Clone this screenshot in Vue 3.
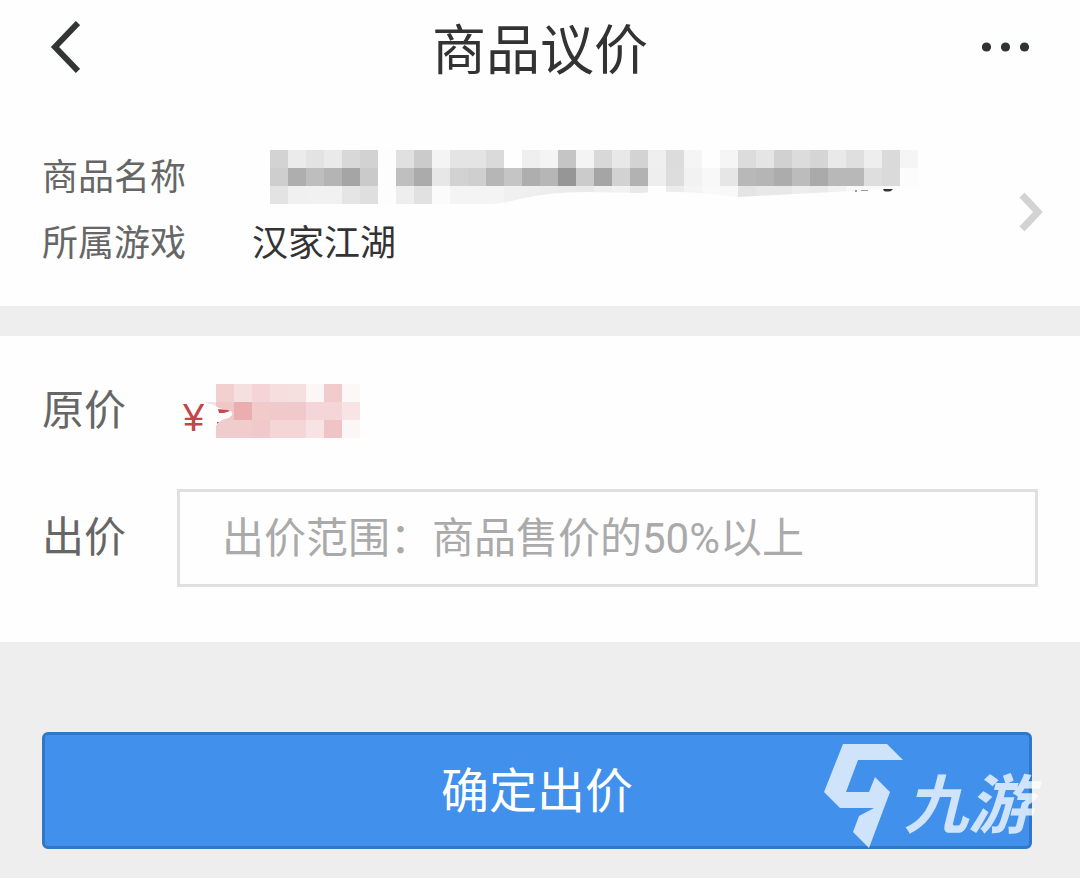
<script setup>
import { ref } from 'vue'

const offer = ref('')
const cell = 18

const nameRows = [
  'd3 eb e3 ea d8 d2 fd e0 cb f4 e4 e4 da fe ef f4 c5 f4 d8 e8 d3 ef dc f5 fe f5 dc e5 d1 dc d5 e9 df ee da f5',
  'ce ae be b4 a5 ca fd bf ab e7 d2 cf b6 c5 ae b6 96 cb a5 d2 b2 ee dd f2 f8 e6 b8 b5 ac bc aa b8 b8 de da fc',
  'e3 f0 f1 f1 e5 df fd ee e1 fb f4 f4 f4 f0 ef ed eb ea f0 f2 e8 fe ec f4 f9 f8 e4 e8 e8 ed eb f1 f8 f8 fa fd',
]
const priceRows = [
  'f3d0d0 f6dfdf f4d4d6 f6dede f5dfdf fdf6f6 f1cccc fdf8f8',
  'f0c6c6 eaaeb0 f1caca f0caca f0caca f5d6d8 f5d5d7 f8e4e5',
  'f1cccc f1cccc f1c9ca f5d6d7 f4d6d6 f7e3e3 f0c3c4 fcf6f6',
]

function toCells(rows) {
  return rows.flatMap((row, r) =>
    row.split(' ').map((c, i) => ({
      x: i * cell,
      y: r * cell,
      fill: '#' + (c.length === 2 ? c + c + c : c),
    })),
  )
}
const nameCells = toCells(nameRows)
const priceCells = toCells(priceRows)
</script>

<template>
  <div class="page">
    <header class="bar">
      <button class="icon-btn back" type="button" aria-label="返回">
        <svg width="32" height="54" viewBox="0 0 32 54">
          <path d="M30 2 L7 26 L30 50" />
        </svg>
      </button>
      <h1>商品议价</h1>
      <button class="icon-btn more" type="button" aria-label="更多">
        <svg width="50" height="14" viewBox="0 0 50 14">
          <circle cx="4.5" cy="6" r="4.6" />
          <circle cx="23.5" cy="6" r="4.6" />
          <circle cx="42.5" cy="6" r="4.6" />
        </svg>
      </button>
    </header>

    <a class="product" href="#">
      <dl>
        <dt>商品名称</dt>
        <dd class="hidden-name">
          <svg width="648" height="54" viewBox="0 0 648 54" aria-hidden="true">
            <clipPath id="nameClip">
              <path d="M0 0H648V37L615 39L600 40L468 47L440 44Q400 40 370 43L315 42Q280 42 250 49Q230 54 222 54H0Z" />
            </clipPath>
            <g clip-path="url(#nameClip)" shape-rendering="crispEdges">
              <rect v-for="(c, i) in nameCells" :key="i" :x="c.x" :y="c.y" :width="cell" :height="cell" :fill="c.fill" />
            </g>
            <path d="M585 40h2v2h-2zM591 40h7v1h-7z" fill="#999" />
            <path d="M613 39h10l-2 2q-4 1-7 0z" fill="#333" />
          </svg>
        </dd>
        <dt>所属游戏</dt>
        <dd>汉家江湖</dd>
      </dl>
      <svg class="chevron" width="26" height="42" viewBox="0 0 26 42" aria-hidden="true">
        <path d="M4 4 L20 21 L4 38" />
      </svg>
    </a>

    <form @submit.prevent>
      <section class="prices">
        <div class="row">
          <span class="label">原价</span>
          <span class="price">
            <span class="yen">¥</span>
            <svg width="156" height="54" viewBox="-12 0 156 54" aria-hidden="true">
              <path d="M-12 18H0V22Z" fill="#f8e3e3" />
              <g shape-rendering="crispEdges">
                <rect v-for="(c, i) in priceCells" :key="i" :x="c.x" :y="c.y" :width="cell" :height="cell" :fill="c.fill" />
              </g>
              <path d="M-1 22 L3 24 L11 26 Q18 27 16 31 Q14 34 9 35 Q2 37 -1 44Z" fill="#fefefe" />
              <path d="M2 25 L12 26 L14 27 L8 29 L3 29Z" fill="#c84a4c" />
              <path d="M1 38h2l-2 2z" fill="#c84a4c" />
            </svg>
          </span>
        </div>
        <div class="row">
          <label class="label" for="offer">出价</label>
          <input id="offer" v-model="offer" type="text" placeholder="出价范围：商品售价的50%以上" />
        </div>
      </section>

      <div class="actions">
        <button class="submit" type="submit">确定出价</button>
        <div class="mark">
          <svg width="80" height="104" viewBox="0 0 80 104" aria-hidden="true">
            <path d="M19 0H63L79 16H34L22 48H45L51 33L66 48L45 104L29 88L35 72L50 64H16L0 48Z" />
          </svg>
          <span>九游</span>
        </div>
      </div>
    </form>
  </div>
</template>

<style>
body {
  margin: 0;
  background: #eee;
}
</style>

<style scoped>
.page {
  font-family: Roboto, "Noto Sans CJK SC", sans-serif;
  font-weight: 400;
  color: #333;
}
.bar {
  display: grid;
  grid-template-columns: 1fr auto 1fr;
  align-items: center;
  height: 96px;
  padding: 0 48px;
  background: #fefefe;
}
h1 {
  margin: 0;
  padding-top: 8px;
  font-size: 54px;
  line-height: 88px;
  font-weight: inherit;
}
.icon-btn {
  display: flex;
  padding: 0;
  border: 0;
  background: none;
}
.back {
  justify-self: start;
}
.back path {
  fill: none;
  stroke: #333436;
  stroke-width: 6;
}
.more {
  justify-self: end;
}
.more circle {
  fill: #303335;
}
.product {
  display: flex;
  align-items: center;
  justify-content: space-between;
  padding: 50px 36px 28px 42px;
  background: #fefefe;
  color: inherit;
  text-decoration: none;
}
dl {
  display: grid;
  grid-template-columns: 210px auto;
  grid-auto-rows: 66px;
  margin: 0;
  font-size: 36px;
  line-height: 64px;
}
dt {
  color: #666;
}
dd {
  margin: 0;
}
.hidden-name {
  display: flex;
  align-items: flex-start;
  padding: 4px 0 0 18px;
}
.chevron path {
  fill: none;
  stroke: #d3d3d3;
  stroke-width: 7;
}
.prices {
  display: grid;
  gap: 29px;
  margin-top: 30px;
  padding: 26px 42px 55px;
  background: #fefefe;
}
.row {
  display: grid;
  grid-template-columns: 135px 1fr;
  align-items: center;
  min-height: 98px;
}
.label {
  font-size: 42px;
  line-height: 60px;
  color: #666;
}
.price {
  display: flex;
  align-items: center;
  padding-left: 6px;
}
.yen {
  width: 21px;
  font-family: "Liberation Sans", sans-serif;
  font-size: 38px;
  line-height: 42px;
  padding-top: 14px;
  color: #c0484b;
}
input {
  box-sizing: border-box;
  width: 100%;
  height: 98px;
  padding: 0 42px;
  border: 3px solid #e0e0e0;
  border-radius: 0;
  background: #fefefe;
  font: inherit;
  font-size: 42px;
  color: #333;
  outline: none;
}
input::placeholder {
  color: #aaa;
  opacity: 1;
}
.actions {
  position: relative;
  padding: 90px 48px 29px 42px;
}
.submit {
  display: block;
  width: 100%;
  height: 117px;
  padding: 0 0 8px;
  border: 3px solid #3077c6;
  border-radius: 6px;
  background: #4190eb;
  font: inherit;
  font-size: 48px;
  color: #fff;
}
.mark {
  position: absolute;
  top: 102px;
  right: 48px;
  display: flex;
  align-items: flex-end;
  color: #fff;
  opacity: 0.75;
  pointer-events: none;
}
.mark path {
  fill: #fff;
}
.mark span {
  font-size: 64px;
  line-height: 82px;
  font-weight: 700;
  font-style: italic;
}
</style>
